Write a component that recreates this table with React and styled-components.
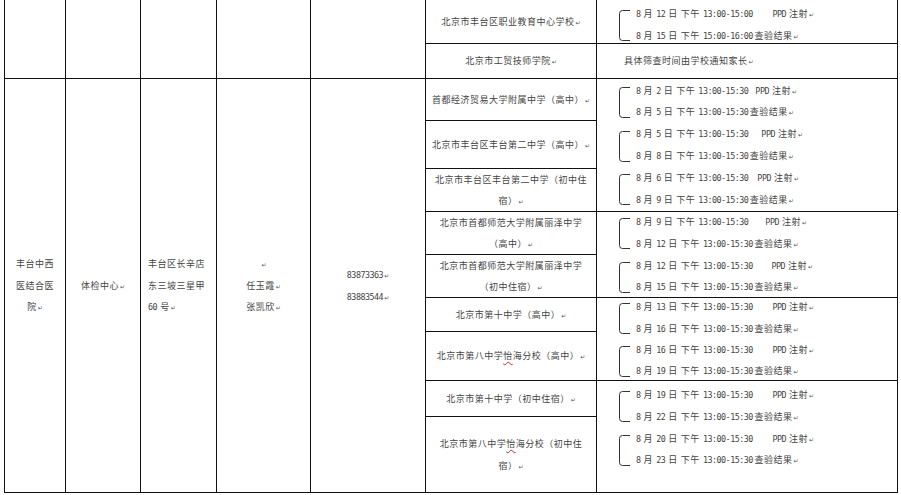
import React from 'react';
import styled, { createGlobalStyle } from 'styled-components';

const Global = createGlobalStyle`
  html, body { margin: 0; padding: 0; background: #fff; }
  body { font-family: "Noto Sans CJK SC", "Noto Sans", sans-serif; }
`;

const Page = styled.div`
  width: 901px;
  height: 495px;
  overflow: hidden;
  box-sizing: border-box;
  padding-left: 4px;
  background: #fff;
`;

const Grid = styled.div`
  display: grid;
  grid-template-columns: 61px 75px 76px 94px 115px 171px 301px;
  grid-template-rows: 44px 35px 42px 48px 43px 43px 43px 34px 49px 36px 76px;
  width: max-content;
  border-left: 1px solid #111;
  font-family: "Noto Sans CJK SC", "Noto Sans", sans-serif;
  font-size: 9px;
  letter-spacing: 0.5px;
  color: #444;
`;

const Cell = styled.div`
  grid-column: ${(p) => p.$c};
  grid-row: ${(p) => p.$r} / span ${(p) => p.$rs || 1};
  box-sizing: border-box;
  border-right: 1px solid #111;
  border-bottom: 1px solid #111;
  display: flex;
  flex-direction: column;
  justify-content: center;
  align-items: ${(p) => (p.$left ? 'flex-start' : 'center')};
  padding: ${(p) => p.$pt || 0}px 0 ${(p) => p.$pb || 0}px ${(p) => p.$pl || 0}px;
  overflow: hidden;
  white-space: nowrap;
`;

const TextLine = styled.div`
  height: ${(p) => p.$lh || 21.5}px;
  line-height: ${(p) => p.$lh || 21.5}px;
  white-space: nowrap;
`;

const Lat = styled.span`
  font-family: "DejaVu Sans Mono", "Liberation Mono", monospace;
  font-size: 8.4px;
  letter-spacing: -0.5px;
  word-spacing: -1.5px;
`;

const MarkGlyph = styled.span`
  font-family: "DejaVu Sans", sans-serif;
  font-size: 6px;
  letter-spacing: 0;
  color: #555;
  margin-left: 1px;
`;

const Squiggle = styled.span`
  text-decoration: underline wavy #d22;
  text-decoration-thickness: 1px;
  text-underline-offset: 2px;
`;

const Pair = styled.div`
  display: flex;
  align-items: center;
  gap: 6px;
  padding-left: 21px;
  flex: none;
`;

const Lines = styled.div`
  display: flex;
  flex-direction: column;
  text-align: left;
`;

const Tail = styled.span`
  margin-left: ${(p) => p.$gap}px;
`;

const Mark = () => <MarkGlyph>↵</MarkGlyph>;

const latin = /^[\u0020-\u024F]+$/;
function Txt({ children }) {
  const runs = String(children).split(/([\u0020-\u024F]+)/).filter(Boolean);
  return runs.map((r, i) =>
    latin.test(r) ? <Lat key={i}>{r}</Lat> : <React.Fragment key={i}>{r}</React.Fragment>
  );
}

function Bracket() {
  return (
    <svg width="12" height="31" viewBox="0 0 12 31" style={{ flex: 'none', marginTop: 2 }}>
      <path d="M12 0.5 H4.5 Q1.5 0.5 1.5 3.5 V27.5 Q1.5 30.5 4.5 30.5 H12" fill="none" stroke="#333" strokeWidth="1" />
    </svg>
  );
}

function TimeLine({ d, time, tail, gap, lh }) {
  return (
    <TextLine $lh={lh}>
      <Txt>{`8 月 ${d} 日 下午 ${time}`}</Txt>
      <Tail $gap={gap}>
        <Txt>{tail}</Txt>
      </Tail>
      <Mark />
    </TextLine>
  );
}

const T = '13:00-15:30';

function Schedule({ pairs, lh = 21.6 }) {
  return pairs.map((p, i) => (
    <Pair key={i}>
      <Bracket />
      <Lines>
        <TimeLine d={p[0]} time={p[2] || T} tail="PPD 注射" gap={p[4]} lh={lh} />
        <TimeLine d={p[1]} time={p[3] || T} tail="查验结果" gap={1.5} lh={lh} />
      </Lines>
    </Pair>
  ));
}

function Para({ lines, lh, markAll }) {
  return lines.map((l, i) => (
    <TextLine key={i} $lh={lh}>
      {l ? <Txt>{l}</Txt> : null}
      {markAll || i === lines.length - 1 || !l ? <Mark /> : null}
    </TextLine>
  ));
}

export default function App() {
  return (
    <>
      <Global />
      <Page>
        <Grid>
          {/* first (cut-off) group */}
          <Cell $c={1} $r={1} $rs={2} />
          <Cell $c={2} $r={1} $rs={2} />
          <Cell $c={3} $r={1} $rs={2} />
          <Cell $c={4} $r={1} $rs={2} />
          <Cell $c={5} $r={1} $rs={2} />
          <Cell $c={6} $r={1}>
            <Para lines={['北京市丰台区职业教育中心学校']} />
          </Cell>
          <Cell $c={7} $r={1} $left $pt={6}>
            <Schedule pairs={[['12', '15', '13:00-15:00', '15:00-16:00', 19.5]]} />
          </Cell>
          <Cell $c={6} $r={2}>
            <Para lines={['北京市工贸技师学院']} />
          </Cell>
          <Cell $c={7} $r={2} $left $pl={27}>
            <Para lines={['具体筛查时间由学校通知家长']} />
          </Cell>

          {/* 丰台中西医结合医院 group */}
          <Cell $c={1} $r={3} $rs={9}>
            <Para lines={['丰台中西', '医结合医', '院']} />
          </Cell>
          <Cell $c={2} $r={3} $rs={9}>
            <Para lines={['体检中心']} />
          </Cell>
          <Cell $c={3} $r={3} $rs={9} $left $pl={7}>
            <Para lines={['丰台区长辛店', '东三坡三星甲', '60 号']} />
          </Cell>
          <Cell $c={4} $r={3} $rs={9}>
            <Para lines={['', '任玉霞', '张凯欣']} markAll />
          </Cell>
          <Cell $c={5} $r={3} $rs={9}>
            <Para lines={['83873363', '83883544']} lh={22} markAll />
          </Cell>

          <Cell $c={6} $r={3}>
            <Para lines={['首都经济贸易大学附属中学（高中）']} />
          </Cell>
          <Cell $c={6} $r={4}>
            <Para lines={['北京市丰台区丰台第二中学（高中）']} />
          </Cell>
          <Cell $c={6} $r={5}>
            <Para lines={['北京市丰台区丰台第二中学（初中住', '宿）']} />
          </Cell>
          <Cell $c={7} $r={3} $rs={3} $left>
            <Schedule
              lh={21.8}
              pairs={[
                ['2', '5', T, T, 7],
                ['5', '8', T, T, 13],
                ['6', '9', T, T, 9],
              ]}
            />
          </Cell>

          <Cell $c={6} $r={6}>
            <Para lines={['北京市首都师范大学附属丽泽中学', '（高中）']} />
          </Cell>
          <Cell $c={6} $r={7}>
            <Para lines={['北京市首都师范大学附属丽泽中学', '（初中住宿）']} />
          </Cell>
          <Cell $c={7} $r={6} $rs={2} $left>
            <Schedule
              lh={21.6}
              pairs={[
                ['9', '12', T, T, 17],
                ['12', '15', T, T, 18.5],
              ]}
            />
          </Cell>

          <Cell $c={6} $r={8}>
            <Para lines={['北京市第十中学（高中）']} />
          </Cell>
          <Cell $c={6} $r={9}>
            <TextLine>
              北京市第八中学<Squiggle>怡</Squiggle>海分校（高中）<Mark />
            </TextLine>
          </Cell>
          <Cell $c={7} $r={8} $rs={2} $left>
            <Schedule
              lh={21.3}
              pairs={[
                ['13', '16', T, T, 19.5],
                ['16', '19', T, T, 19.5],
              ]}
            />
          </Cell>

          <Cell $c={6} $r={10}>
            <Para lines={['北京市第十中学（初中住宿）']} />
          </Cell>
          <Cell $c={6} $r={11}>
            <TextLine>
              北京市第八中学<Squiggle>怡</Squiggle>海分校（初中住
            </TextLine>
            <TextLine>
              宿）<Mark />
            </TextLine>
          </Cell>
          <Cell $c={7} $r={10} $rs={2} $left $pb={18}>
            <Schedule
              lh={21.7}
              pairs={[
                ['19', '22', T, T, 19.5],
                ['20', '23', T, T, 19.5],
              ]}
            />
          </Cell>
        </Grid>
      </Page>
    </>
  );
}
